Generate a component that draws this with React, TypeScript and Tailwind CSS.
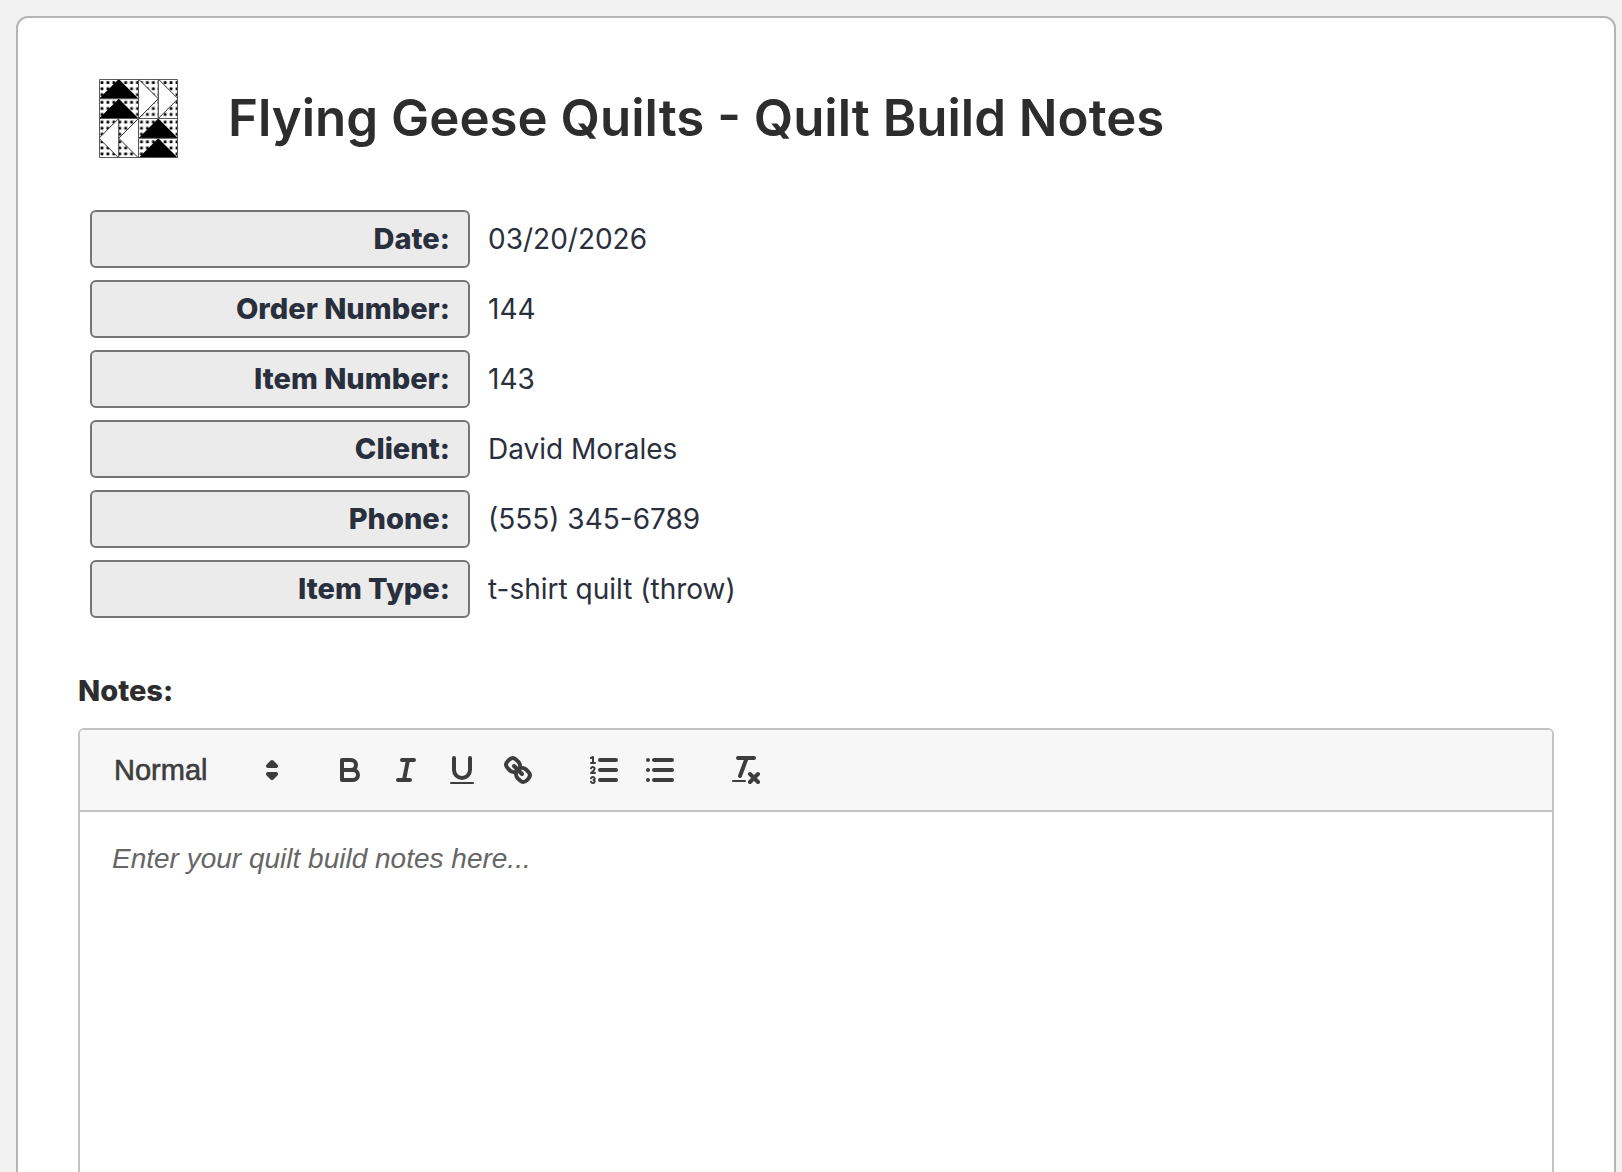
import React from 'react';

const details = [
  { label: 'Date:', value: '03/20/2026' },
  { label: 'Order Number:', value: '144' },
  { label: 'Item Number:', value: '143' },
  { label: 'Client:', value: 'David Morales' },
  { label: 'Phone:', value: '(555) 345-6789' },
  { label: 'Item Type:', value: 't-shirt quilt (throw)' },
];

const Logo: React.FC = () => (
  <svg viewBox="0 0 80 80" className="w-[79px] h-[79px]" role="img" aria-label="Flying Geese Quilts">
    <defs>
      <pattern id="dots" width="40" height="20" patternUnits="userSpaceOnUse">
        <path
          d="M1.6 3.6H40M1.6 9.8H40M1.6 15.9H40"
          stroke="#000"
          strokeWidth="2.8"
          strokeDasharray="2.8 3.2"
        />
      </pattern>
    </defs>
    <rect width="80" height="80" fill="#fff" />
    <rect width="80" height="80" fill="url(#dots)" />
    <path d="M0 20 20 0 40 20ZM0 40 20 20 40 40ZM40 60 60 40 80 60ZM40 80 60 60 80 80Z" fill="#000" />
    <path
      d="M40 0 60 20 40 40ZM60 0 80 20 60 40ZM20 40 0 60 20 80ZM40 40 20 60 40 80Z"
      fill="#fff"
      stroke="#333"
      strokeWidth="1"
    />
    <path d="M.5.5h79v79H.5ZM40 0v80M0 40h80M0 20h40M40 60h40" fill="none" stroke="#555" />
  </svg>
);

const Icon: React.FC<{ children: React.ReactNode }> = ({ children }) => (
  <svg
    viewBox="0 0 18 18"
    className="w-9 h-9"
    fill="none"
    stroke="#3d3d3d"
    strokeWidth="2"
    strokeLinecap="round"
    strokeLinejoin="round"
    aria-hidden="true"
  >
    {children}
  </svg>
);

const ToolButton: React.FC<{ label: string; children: React.ReactNode }> = ({ label, children }) => (
  <button type="button" aria-label={label} className="w-14 h-12 flex items-center justify-center cursor-pointer">
    <Icon>{children}</Icon>
  </button>
);

const Toolbar: React.FC = () => (
  <div className="flex items-center flex-wrap gap-[30px] p-4 bg-[#f7f7f7] border-b-2 border-[#c4c4c4]">
    <div className="relative w-[196px] h-12">
      <select
        aria-label="Text style"
        defaultValue="normal"
        className="appearance-none w-full h-full pl-[18px] pr-9 bg-transparent text-[29px] text-[#3d3d3d] [-webkit-text-stroke:0.6px_#3d3d3d] font-['Liberation_Sans',Helvetica,Arial,sans-serif] outline-none cursor-pointer"
      >
        <option value="normal">Normal</option>
        <option value="h1">Heading 1</option>
        <option value="h2">Heading 2</option>
      </select>
      <div className="absolute right-0.5 inset-y-0 flex items-center pointer-events-none">
        <Icon>
          <path d="M7 11 9 13 11 11ZM7 7 9 5 11 7Z" fill="#3d3d3d" />
        </Icon>
      </div>
    </div>

    <div className="flex">
      <ToolButton label="Bold">
        <path d="M5,4H9.5A2.5,2.5,0,0,1,12,6.5v0A2.5,2.5,0,0,1,9.5,9H5V4Z" />
        <path d="M5,9h5.5A2.5,2.5,0,0,1,13,11.5v0A2.5,2.5,0,0,1,10.5,14H5V9Z" />
      </ToolButton>
      <ToolButton label="Italic">
        <path d="M7 4H13M5 14H11M8 14 10 4" />
      </ToolButton>
      <ToolButton label="Underline">
        <path d="M5,3V9a4.012,4.012,0,0,0,4,4H9a4.012,4.012,0,0,0,4-4V3" />
        <rect x="3" y="15" width="12" height="1" rx="0.5" fill="#3d3d3d" stroke="none" />
      </ToolButton>
      <ToolButton label="Link">
        <path d="M7 7 11 11" />
        <path d="M8.9,4.577a3.476,3.476,0,0,1,.36,4.679A3.476,3.476,0,0,1,4.577,8.9C3.185,7.5,2.035,6.4,4.217,4.217S7.5,3.185,8.9,4.577Z" />
        <path d="M13.423,9.1a3.476,3.476,0,0,0-4.679-.36,3.476,3.476,0,0,0,.36,4.679c1.392,1.392,2.5,2.542,4.679.36S14.815,10.5,13.423,9.1Z" />
      </ToolButton>
    </div>

    <div className="flex">
      <ToolButton label="Numbered list">
        <path d="M7 4H15M7 9H15M7 14H15" />
        <g strokeWidth="1">
          <path d="M2.5 5.5H4.5M2.5 3 3.5 2.5V5.5" />
          <path d="M4.5,10.5h-2c0-.234,1.85-1.076,1.85-2.234A0.959,0.959,0,0,0,2.5,8.156" />
          <path d="M2.5,14.846a0.959,0.959,0,0,0,1.85-.109A0.7,0.7,0,0,0,3.75,14a0.688,0.688,0,0,0,.6-0.736,0.959,0.959,0,0,0-1.85-.109" />
        </g>
      </ToolButton>
      <ToolButton label="Bullet list">
        <path d="M6 4H15M6 9H15M6 14H15M3 4H3M3 9H3M3 14H3" />
      </ToolButton>
    </div>

    <ToolButton label="Clear formatting">
      <path d="M5 3H13M6 12 9.35 3M11 11 15 15M15 11 11 15" />
      <rect x="2" y="14" width="7" height="1" rx="0.5" fill="#3d3d3d" stroke="none" />
    </ToolButton>
  </div>
);

export default function App() {
  return (
    <div className="h-screen overflow-y-auto [scrollbar-width:none] bg-[#f2f2f2] pt-4 pl-4 pr-1.5 font-[Inter,'Open_Sans',sans-serif]">
      <main className="bg-white border-2 border-[#b5b5b5] rounded-xl p-[60px] text-[28px] leading-9">
        <header className="flex items-center gap-[50px] h-20 pl-[21px]">
          <Logo />
          <h1 className="text-[51px] leading-[60px] font-semibold text-[#2d2d2d]">
            Flying Geese Quilts - Quilt Build Notes
          </h1>
        </header>

        <dl className="flex flex-col gap-3 mt-[52px] px-3 text-[#2a2f3d]">
          {details.map((item) => (
            <div key={item.label} className="flex items-center gap-[18px]">
              <dt className="w-[380px] h-[58px] px-[18px] flex items-center justify-end shrink-0 bg-[#ebebeb] border-2 border-[#757575] rounded-md text-[29px] font-extrabold">
                {item.label}
              </dt>
              <dd>{item.value}</dd>
            </div>
          ))}
        </dl>

        <label htmlFor="notes" className="block mt-[55px] text-[29px] leading-9 font-extrabold text-[#2d2d2d]">
          Notes:
        </label>
        <div className="mt-[19px] border-2 border-[#c4c4c4] rounded-md overflow-hidden">
          <Toolbar />
          <textarea
            id="notes"
            placeholder="Enter your quilt build notes here..."
            className="block w-full min-h-[600px] px-8 py-[29px] resize-none outline-none font-['Liberation_Sans',Helvetica,Arial,sans-serif] placeholder:italic placeholder:text-[#666]"
          />
        </div>
      </main>
    </div>
  );
}
